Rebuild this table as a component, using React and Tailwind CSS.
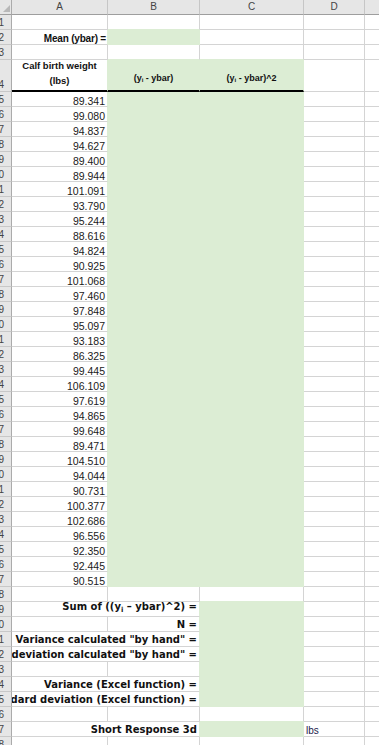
import React from "react";

const values = [
  "89.341","99.080","94.837","94.627","89.400","89.944","101.091","93.790","95.244","88.616",
  "94.824","90.925","101.068","97.460","97.848","95.097","93.183","86.325","99.445","106.109",
  "97.619","94.865","99.648","89.471","104.510","94.044","90.731","100.377","102.686","96.556",
  "92.350","92.445","90.515",
];

const cols = ["A", "B", "C", "D", "E"];

function isGreen(r, c) {
  if (r === 2 && c === "B") return true;
  if (r >= 4 && r <= 37 && (c === "B" || c === "C")) return true;
  if (r >= 39 && r <= 45 && c === "C") return true;
  if (r === 47 && c === "C") return true;
  return false;
}

const widthCls = {
  A: "w-[96px]",
  B: "w-[92px]",
  C: "w-[104px]",
  D: "w-[61px]",
  E: "w-[40px]",
};

const labelFont = { fontFamily: '"DejaVu Sans", sans-serif' };

const labels = {
  39: (
    <>
      Sum of ((y<span className="text-[7px] align-[-2px]">i</span> – ybar)^2) =
    </>
  ),
  41: 'Variance calculated "by hand" =',
  42: 'Standard deviation calculated "by hand" =',
  44: "Variance (Excel function) =",
  45: "Standard deviation (Excel function) =",
  47: "Short Response 3d",
};

function RowHeader({ n, tall }) {
  return (
    <div
      className={
        (tall ? "h-[32px] " : "h-[15px] ") +
        "w-[12px] shrink-0 overflow-hidden bg-[#e6e6e6] border-r border-b border-r-[#ababab] border-b-[#c8c8c8] flex items-end justify-end pr-[7px] text-[10px] leading-[12px] text-[#444]"
      }
    >
      <span className="whitespace-nowrap">{n}</span>
    </div>
  );
}

function Cell({ r, c, children, extra = "" }) {
  const idx = cols.indexOf(c);
  const next = cols[idx + 1];
  const g = isGreen(r, c);
  const rightGreen = g || (next && isGreen(r, next));
  const bottomGreen = g || isGreen(r + 1, c);
  const thick = r === 4 && (c === "A" || c === "B" || c === "C");
  let cls = widthCls[c] + " shrink-0 h-full border-r overflow-hidden ";
  cls += rightGreen ? "border-r-[#dcedd4] " : "border-r-[#d4d4d4] ";
  if (thick) cls += "border-b-2 border-b-black ";
  else cls += bottomGreen ? "border-b border-b-[#dcedd4] " : "border-b border-b-[#d4d4d4] ";
  cls += g ? "bg-[#dcedd4] " : "bg-white ";
  return <div className={cls + extra}>{children}</div>;
}

function Row({ r }) {
  const tall = r === 4;
  const h = tall ? "h-[32px]" : "h-[15px]";

  if (labels[r] !== undefined) {
    const rightGreen = isGreen(r, "C");
    const bottomGreenA = isGreen(r + 1, "A");
    return (
      <div className={"flex " + h}>
        <RowHeader n={r} />
        <div
          className={
            "w-[188px] shrink-0 h-full border-r border-b overflow-hidden flex items-end justify-end pr-[2px] pb-[1px] bg-white " +
            (rightGreen ? "border-r-[#dcedd4] " : "border-r-[#d4d4d4] ") +
            (bottomGreenA ? "border-b-[#dcedd4]" : "border-b-[#d4d4d4]")
          }
        >
          <span
            className="whitespace-nowrap font-bold text-[10px] leading-[10px] text-[#111]"
            style={labelFont}
          >
            {labels[r]}
          </span>
        </div>
        <Cell r={r} c="C" />
        <Cell r={r} c="D" extra="flex items-end pl-[2px]">
          {r === 47 && (
            <span className="text-[10px] leading-[10px] text-[#1a1a4a]">lbs</span>
          )}
        </Cell>
        <Cell r={r} c="E" />
      </div>
    );
  }

  let a = null;
  let b = null;
  let c = null;
  if (r === 2) {
    a = (
      <div className="flex h-full items-end justify-end pr-[1px]">
        <span className="font-bold text-[10px] leading-[10px] text-[#111] whitespace-nowrap tracking-[-0.2px]">
          Mean (ybar) =
        </span>
      </div>
    );
  } else if (r === 4) {
    a = (
      <div className="flex h-full flex-col items-center justify-end pb-[2px] font-bold text-[9.5px] leading-[15px] text-[#111]">
        <span className="whitespace-nowrap">Calf birth weight</span>
        <span>(lbs)</span>
      </div>
    );
    b = (
      <div className="flex h-full items-end justify-center pb-[2px] font-bold text-[9px] leading-[15px] text-[#111]">
        <span className="whitespace-nowrap">
          (y<span className="text-[6px] align-[-1px]">i</span> - ybar)
        </span>
      </div>
    );
    c = (
      <div className="flex h-full items-end justify-center pb-[2px] font-bold text-[9px] leading-[15px] text-[#111]">
        <span className="whitespace-nowrap">
          (y<span className="text-[6px] align-[-1px]">i</span> - ybar)^2
        </span>
      </div>
    );
  } else if (r >= 5 && r <= 37) {
    a = (
      <div className="flex h-full items-end justify-end pr-[2px]">
        <span className="text-[10.5px] leading-[10px] text-[#1a1a1a]">{values[r - 5]}</span>
      </div>
    );
  } else if (r === 40) {
    b = (
      <div className="flex h-full items-end justify-end pr-[2px] pb-[1px]">
        <span className="font-bold text-[10px] leading-[10px] text-[#111] whitespace-nowrap" style={labelFont}>
          N =
        </span>
      </div>
    );
  }

  return (
    <div className={"flex " + h}>
      <RowHeader n={r} tall={tall} />
      <Cell r={r} c="A">{a}</Cell>
      <Cell r={r} c="B">{b}</Cell>
      <Cell r={r} c="C">{c}</Cell>
      <Cell r={r} c="D" />
      <Cell r={r} c="E" />
    </div>
  );
}

export default function App() {
  const rows = [];
  for (let r = 1; r <= 48; r++) rows.push(r);
  return (
    <div
      className="w-[379px] h-[745px] overflow-hidden bg-white"
      style={{ fontFamily: '"Liberation Sans", Arial, sans-serif' }}
    >
      <div className="flex h-[15px]">
        <div className="w-[12px] shrink-0 h-full bg-[#e6e6e6] border-r border-b border-r-[#ababab] border-b-[#9e9e9e] relative">
          <svg className="absolute left-[3px] top-[5px]" width="7" height="7" viewBox="0 0 7 7">
            <polygon points="7,0 7,7 0,7" fill="#b8b8b8" />
          </svg>
        </div>
        {cols.map((c) => (
          <div
            key={c}
            className={
              widthCls[c] +
              " shrink-0 h-full bg-[#e6e6e6] border-r border-b border-r-[#c6c6c6] border-b-[#9e9e9e] flex items-center justify-center text-[10px] leading-none text-[#444]"
            }
          >
            {c === "E" ? "" : c}
          </div>
        ))}
      </div>
      {rows.map((r) => (
        <Row key={r} r={r} />
      ))}
    </div>
  );
}
